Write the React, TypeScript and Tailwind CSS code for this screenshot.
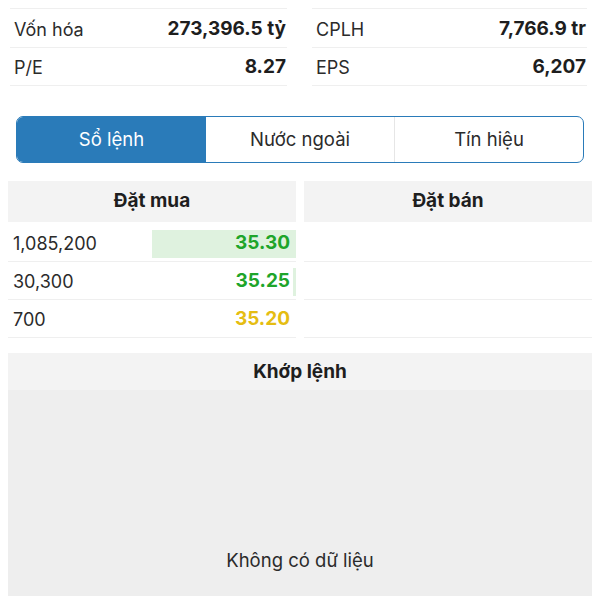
import React from "react";

const font = { fontFamily: "Inter, 'Noto Sans', sans-serif" };

function InfoRow({ label, value, first }: { label: string; value: string; first?: boolean }) {
  return (
    <div
      className={`${first ? "h-[39px]" : "h-[38px]"} border-b border-[#efefef] flex items-center justify-between pl-[4px] pr-[1px] pt-[2px]`}
    >
      <span className="text-[18px] text-[#2b2b2b]">{label}</span>
      <span className="text-[19px] font-bold text-[#1e1e1e]">{value}</span>
    </div>
  );
}

export default function App() {
  const bids = [
    { vol: "1,085,200", price: "35.30", color: "text-[#1ea52a]", bar: 144 },
    { vol: "30,300", price: "35.25", color: "text-[#1ea52a]", bar: 3 },
    { vol: "700", price: "35.20", color: "text-[#e5bd12]", bar: 0 },
  ];
  return (
    <div className="w-[600px] h-[600px] bg-white overflow-hidden flex flex-col" style={font}>
      <div className="px-[10px] grid grid-cols-[277px_275px] gap-x-[25px]">
        <div className="flex flex-col">
          <div className="h-[9px] border-b border-[#efefef]" />
          <InfoRow label="Vốn hóa" value="273,396.5 tỷ" first />
          <InfoRow label="P/E" value="8.27" />
        </div>
        <div className="flex flex-col">
          <div className="h-[9px] border-b border-[#efefef]" />
          <InfoRow label="CPLH" value="7,766.9 tr" first />
          <InfoRow label="EPS" value="6,207" />
        </div>
      </div>

      <div className="mt-[30px] mx-[16px] h-[47px] border border-[#2a7bb9] rounded-[7px] flex overflow-hidden">
        <div className="w-[189px] bg-[#2a7bb9] flex items-center justify-center text-[18.5px] text-white">Sổ lệnh</div>
        <div className="flex-1 flex items-center justify-center text-[18.5px] text-[#2b2b2b] border-r border-[#e6e6e6]">Nước ngoài</div>
        <div className="flex-1 flex items-center justify-center text-[18.5px] text-[#2b2b2b]">Tín hiệu</div>
      </div>

      <div className="mt-[18px] px-[8px] grid grid-cols-2 gap-x-[8px]">
        <div className="flex flex-col">
          <div className="h-[41px] bg-[#f3f3f3] flex items-center justify-center text-[19px] font-bold text-[#1e1e1e]">Đặt mua</div>
          <div className="h-[2px]" />
          {bids.map((b) => (
            <div key={b.vol} className="relative h-[38px] border-b border-[#efefef] flex items-center justify-between pl-[5px] pr-[6px] pt-[2px]">
              {b.bar > 0 && (
                <div
                  className="absolute right-0 top-[6px] h-[28px] bg-[#dff2df]"
                  style={{ width: b.bar }}
                />
              )}
              <span className="relative text-[18px] text-[#2b2b2b]">{b.vol}</span>
              <span className={`relative text-[19px] font-bold ${b.color}`}>{b.price}</span>
            </div>
          ))}
        </div>
        <div className="flex flex-col">
          <div className="h-[41px] bg-[#f3f3f3] flex items-center justify-center text-[19px] font-bold text-[#1e1e1e]">Đặt bán</div>
          <div className="h-[2px]" />
          {[0, 1, 2].map((i) => (
            <div key={i} className="h-[38px] border-b border-[#efefef]" />
          ))}
        </div>
      </div>

      <div className="mt-[15px] mx-[8px] flex flex-col">
        <div className="h-[37px] bg-[#f3f3f3] flex items-center justify-center text-[19px] font-bold text-[#1e1e1e] pt-[2px]">Khớp lệnh</div>
        <div className="h-[206px] bg-[#eeeeee] flex items-end justify-center pb-[21px]">
          <span className="text-[18.5px] text-[#2b2b2b]">Không có dữ liệu</span>
        </div>
      </div>
    </div>
  );
}
